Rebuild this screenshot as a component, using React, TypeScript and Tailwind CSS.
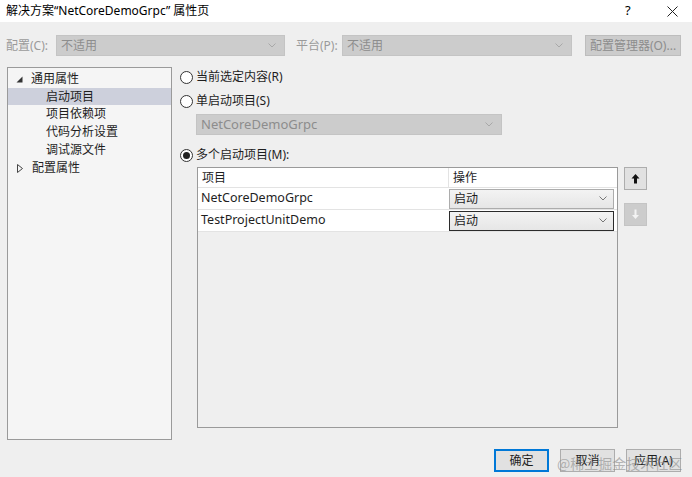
import React from 'react';

const font = { fontFamily: '"Segoe UI", "Noto Sans", "Noto Sans CJK SC", sans-serif' };

function Chevron({ color = '#8a8a8a' }: { color?: string }) {
  return (
    <svg width="8" height="5" viewBox="0 0 8 5">
      <path d="M0.5 0.5 L4 4 L7.5 0.5" fill="none" stroke={color} strokeWidth="1" />
    </svg>
  );
}

function Radio({ checked, label }: { checked?: boolean; label: string }) {
  return (
    <div className="flex items-center h-[16px] gap-[3px] text-[12px] text-[#1e1e1e]">
      <span className="w-[13px] h-[13px] rounded-full border border-[#333] bg-white flex items-center justify-center">
        {checked && <span className="w-[7px] h-[7px] rounded-full bg-[#222]" />}
      </span>
      <span>{label}</span>
    </div>
  );
}

function DisabledSelect({ text, className }: { text: string; className: string }) {
  return (
    <div className={`h-[21px] bg-[#cccccc] border border-[#c4c4c4] flex items-center justify-between pl-[4px] pr-[8px] text-[12px] text-[#8d8d8d] ${className}`}>
      <span>{text}</span>
      <Chevron color="#a8a8a8" />
    </div>
  );
}

function CellSelect({ focused }: { focused?: boolean }) {
  return (
    <div
      className={`h-[20px] w-full flex items-center justify-between pl-[4px] pr-[6px] text-[12px] text-[#1e1e1e] bg-gradient-to-b from-[#f3f3f3] to-[#e6e6e6] ${
        focused ? 'border border-[#2b2b2b]' : 'border border-[#acacac]'
      }`}
    >
      <span>启动</span>
      <Chevron color="#777" />
    </div>
  );
}

export default function App() {
  const rows = ['NetCoreDemoGrpc', 'TestProjectUnitDemo'];
  return (
    <div className="relative w-[692px] h-[477px] bg-[#efefef] flex flex-col overflow-hidden" style={font}>
      {/* title bar */}
      <div className="h-[22px] bg-white flex items-center pl-[6px] pr-[14px] text-[12px] text-black">
        <span className="flex-1">解决方案“NetCoreDemoGrpc” 属性页</span>
        <span className="w-[10px] mr-[32px] text-[13px]">?</span>
        <svg width="11" height="11" viewBox="0 0 11 11">
          <path d="M0.5 0.5 L10.5 10.5 M10.5 0.5 L0.5 10.5" stroke="#222" strokeWidth="1" />
        </svg>
      </div>

      {/* config row */}
      <div className="mt-[13px] flex items-center pl-[6px] h-[21px] text-[12px] text-[#9a9a9a]">
        <span className="w-[50px]">配置(C):</span>
        <DisabledSelect text="不适用" className="w-[229px]" />
        <span className="ml-[11px] w-[46px]">平台(P):</span>
        <DisabledSelect text="不适用" className="w-[230px]" />
        <div className="ml-[13px] w-[96px] h-[21px] bg-[#cccccc] border border-[#bdbdbd] flex items-center justify-center text-[#8d8d8d]">
          配置管理器(O)...
        </div>
      </div>

      {/* main */}
      <div className="mt-[11px] flex pl-[7px] h-[373px]">
        {/* tree */}
        <div className="w-[165px] h-full border border-[#9a9a9a] bg-[#f5f5f5] pt-[2px] text-[12px] text-[#1e1e1e]">
          <div className="h-[18px] flex items-center pl-[8px]">
            <svg width="7" height="7" viewBox="0 0 7 7" className="mr-[8px]">
              <path d="M6.5 0.5 L6.5 6.5 L0.5 6.5 Z" fill="#333" />
            </svg>
            通用属性
          </div>
          <div className="h-[17px] flex items-center pl-[38px] bg-[#cdd0dc]">启动项目</div>
          <div className="h-[18px] flex items-center pl-[38px]">项目依赖项</div>
          <div className="h-[18px] flex items-center pl-[38px]">代码分析设置</div>
          <div className="h-[18px] flex items-center pl-[38px]">调试源文件</div>
          <div className="h-[18px] flex items-center pl-[9px]">
            <svg width="6" height="9" viewBox="0 0 6 9" className="mr-[9px]">
              <path d="M0.5 0.5 L5.5 4.5 L0.5 8.5 Z" fill="none" stroke="#444" strokeWidth="1" />
            </svg>
            配置属性
          </div>
        </div>

        {/* right */}
        <div className="ml-[8px] flex flex-col pt-[2px]">
          <Radio label="当前选定内容(R)" />
          <div className="mt-[8px]">
            <Radio label="单启动项目(S)" />
          </div>
          <DisabledSelect text="NetCoreDemoGrpc" className="mt-[5px] ml-[16px] w-[306px] text-[13px]" />
          <div className="mt-[12px]">
            <Radio checked label="多个启动项目(M):" />
          </div>
          <div className="mt-[4px] ml-[17px] flex gap-[6px]">
            <div className="w-[421px] h-[261px] border border-[#9a9a9a] bg-[#efefef] flex flex-col text-[12px] text-[#1e1e1e]">
              <div className="h-[20px] flex bg-white border-b border-[#e3e3e3]">
                <div className="w-[251px] pl-[4px] flex items-center border-r border-[#e3e3e3]">项目</div>
                <div className="flex-1 pl-[4px] flex items-center">操作</div>
              </div>
              {rows.map((r, i) => (
                <div key={r} className="h-[22px] flex bg-white border-b border-[#e3e3e3]">
                  <div className="w-[251px] pl-[3px] flex items-center text-[12.5px]">{r}</div>
                  <div className="flex-1 flex items-center pr-[3px]">
                    <CellSelect focused={i === 1} />
                  </div>
                </div>
              ))}
            </div>
            <div className="flex flex-col">
              <div className="w-[23px] h-[23px] bg-[#e1e1e1] border border-[#adadad] flex items-center justify-center">
                <svg width="9" height="11" viewBox="0 0 9 11">
                  <path d="M4.5 1 L8.5 5.5 L6 5.5 L6 10.5 L3 10.5 L3 5.5 L0.5 5.5 Z" fill="#111" />
                </svg>
              </div>
              <div className="mt-[13px] w-[23px] h-[23px] bg-[#cccccc] border border-[#c4c4c4] flex items-center justify-center">
                <svg width="9" height="11" viewBox="0 0 9 11">
                  <path d="M4.5 10 L8 6 L5.5 6 L5.5 0.5 L3.5 0.5 L3.5 6 L1 6 Z" fill="#f3f3f3" />
                </svg>
              </div>
            </div>
          </div>
        </div>
      </div>

      {/* bottom buttons */}
      <div className="mt-[9px] flex justify-end pr-[11px] gap-[11px] text-[12px] text-[#1e1e1e]">
        <div className="w-[55px] h-[23px] bg-[#e1e1e1] border-2 border-[#0078d7] flex items-center justify-center">确定</div>
        <div className="w-[55px] h-[23px] bg-[#e1e1e1] border border-[#adadad] flex items-center justify-center">取消</div>
        <div className="w-[55px] h-[23px] bg-[#e1e1e1] border border-[#adadad] flex items-center justify-center">应用(A)</div>
      </div>

      {/* watermark */}
      <div
        className="absolute left-[557px] top-[453px] text-[14px] text-[#8a8a8a]/60 whitespace-nowrap pointer-events-none"
        style={{ fontFamily: '"Noto Sans CJK SC", sans-serif' }}
      >
        @稀土掘金技术社区
      </div>
    </div>
  );
}
